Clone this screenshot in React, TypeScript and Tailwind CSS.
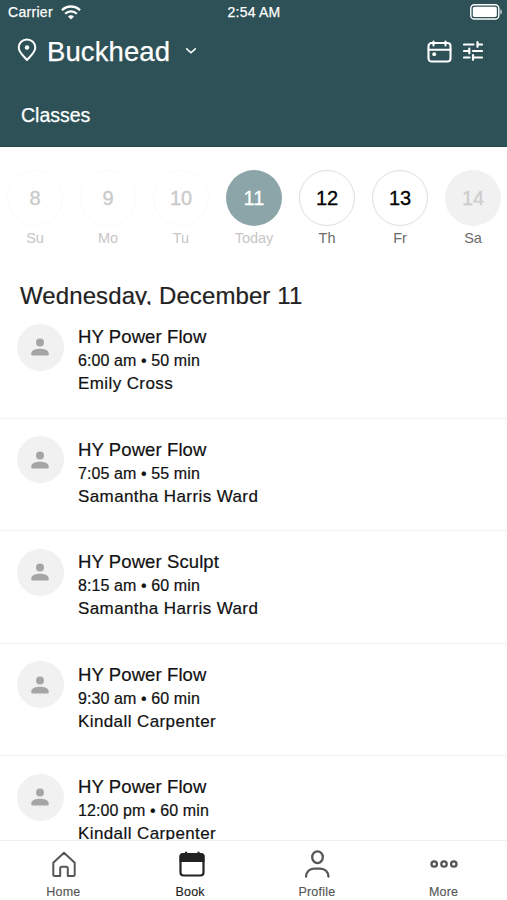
const days = [
  { num: '8', label: 'Su', state: 'past' },
  { num: '9', label: 'Mo', state: 'past' },
  { num: '10', label: 'Tu', state: 'past' },
  { num: '11', label: 'Today', state: 'active' },
  { num: '12', label: 'Th', state: 'open' },
  { num: '13', label: 'Fr', state: 'open' },
  { num: '14', label: 'Sa', state: 'closed' },
]

const circleStyles: Record<string, string> = {
  past: 'border border-[#fafafa] text-[#c9c9c9]',
  active: 'bg-[#8ba5a8] text-white',
  open: 'border border-[#dedede] text-black',
  closed: 'bg-[#f1f1f1] text-[#cdcdcd]',
}

const labelStyles: Record<string, string> = {
  past: 'text-[#c6c6c6]',
  active: 'text-[#c6c6c6]',
  open: 'text-[#6b6b6b]',
  closed: 'text-[#6b6b6b]',
}

const classes = [
  { title: 'HY Power Flow', time: '6:00 am • 50 min', teacher: 'Emily Cross' },
  { title: 'HY Power Flow', time: '7:05 am • 55 min', teacher: 'Samantha Harris Ward' },
  { title: 'HY Power Sculpt', time: '8:15 am • 60 min', teacher: 'Samantha Harris Ward' },
  { title: 'HY Power Flow', time: '9:30 am • 60 min', teacher: 'Kindall Carpenter' },
  { title: 'HY Power Flow', time: '12:00 pm • 60 min', teacher: 'Kindall Carpenter' },
]

function StatusBar() {
  return (
    <div className="flex h-6 items-center justify-between pl-2 pr-1 text-[14px] leading-6">
      <div className="flex w-[160px] items-center gap-2">
        <span className="tracking-[0.3px]">Carrier</span>
        <svg width="20" height="15" viewBox="0 0 20 15" fill="none" stroke="currentColor" strokeWidth="2.3">
          <path d="M.9 5.2a13 13 0 0 1 18.2 0" />
          <path d="M4.2 8.7a8.2 8.2 0 0 1 11.6 0" />
          <path d="M6.9 11.5a4.4 4.4 0 0 1 6.2 0L10 14.6Z" fill="currentColor" stroke="none" />
        </svg>
      </div>
      <span className="mr-[3px] tracking-[0.2px]">2:54 AM</span>
      <div className="flex w-[160px] justify-end">
        <svg width="33" height="16" viewBox="0 0 33 16" fill="none">
          <rect x=".8" y=".8" width="28" height="14.2" rx="3.6" stroke="currentColor" strokeWidth="1.4" />
          <rect x="2.8" y="2.8" width="24" height="10.2" rx="1.8" fill="currentColor" />
          <path d="M30.5 5.3c1.6.4 1.6 4.8 0 5.2Z" fill="currentColor" />
        </svg>
      </div>
    </div>
  )
}

function Header() {
  return (
    <header className="h-[147px] shrink-0 border-b border-[#24464a] bg-[#2d5156] text-white [-webkit-text-stroke:0.25px_currentColor]">
      <StatusBar />
      <div className="flex h-[54px] items-center pl-[17px] pr-[24px]">
        <svg className="-mt-[2px]" width="20" height="24" viewBox="0 0 20 24" fill="none" stroke="currentColor" strokeWidth="2" strokeLinejoin="round">
          <path d="M10 22C7.4 18.8 1.7 14.3 1.7 9.7a8.3 8.3 0 0 1 16.6 0C18.3 14.3 12.6 18.8 10 22Z" />
          <circle cx="10" cy="9.5" r="2.2" fill="currentColor" stroke="none" />
        </svg>
        <span className="ml-[10px] mt-[2px] text-[27.5px] leading-[54px] tracking-[0.1px]">Buckhead</span>
        <svg className="ml-[15px]" width="12" height="8" viewBox="0 0 12 8" fill="none" stroke="currentColor" strokeWidth="1.5">
          <path d="m1.2 1.4 4.8 4.4 4.8-4.4" />
        </svg>
        <div className="ml-auto flex items-center gap-[11px]">
          <svg width="25" height="23" viewBox="0 0 25 23" fill="none" stroke="currentColor" strokeWidth="2.1" strokeLinecap="round">
            <rect x="1.5" y="3" width="22" height="18.5" rx="3" />
            <path d="M1.5 9.7h22M6.5 1.5v4M18.5 1.5v4" />
            <circle cx="7.2" cy="14.2" r="1.9" fill="currentColor" stroke="none" />
          </svg>
          <svg width="20" height="20" viewBox="0 0 20 20" fill="none" stroke="currentColor" strokeWidth="2.2" strokeLinecap="round">
            <path d="M1 3.5h9.500M14.500 3.500H19M14.500 1.200v4.600M1 10h4M6.300 7.700v4.600M10 10h9M1 16.500h5.500M10 16.500h9M10 14.200v4.600" />
          </svg>
        </div>
      </div>
      <div className="pl-[21px] pt-[20px] text-[19.5px] leading-[34px]">Classes</div>
    </header>
  )
}

function DayPicker() {
  return (
    <div className="-ml-[1.5px] -mr-[2.5px] grid h-[117px] shrink-0 grid-cols-7 content-start pt-[23px]">
      {days.map((d) => (
        <div key={d.num} className="flex flex-col items-center">
          <div className={`flex h-14 w-14 items-center justify-center rounded-full text-[20px] [-webkit-text-stroke:0.3px_currentColor] ${circleStyles[d.state]}`}>
            {d.num}
          </div>
          <span className={`text-[14.5px] leading-6 ${labelStyles[d.state]}`}>{d.label}</span>
        </div>
      ))}
    </div>
  )
}

function Avatar() {
  return (
    <div className="flex h-[47px] w-[47px] shrink-0 items-center justify-center rounded-full bg-[#f1f1f1]">
      <svg className="-ml-px" width="18" height="18" viewBox="0 0 18 18" fill="#a5a5a5">
        <circle cx="9" cy="4.5" r="4" />
        <path d="M.3 15.4C.3 12 5 10.7 9 10.7s8.7 1.3 8.7 4.7v.9q0 1.2-1.2 1.2h-15Q.3 17.5.3 16.3Z" />
      </svg>
    </div>
  )
}

function ClassList() {
  return (
    <div className="mt-[1.5px] min-h-0 flex-1 overflow-hidden">
      {classes.map((c, i) => (
        <div key={i} className="flex h-[112.5px] gap-[14px] border-b border-[#f3f3f3] pl-[17px] pt-[17.5px] text-[#111] [-webkit-text-stroke:0.2px_currentColor]">
          <Avatar />
          <div className="pt-[1.5px]">
            <p className="text-[18.5px] leading-6 tracking-[0.1px]">{c.title}</p>
            <p className="text-[16px] leading-6 tracking-[0.1px]">{c.time}</p>
            <p className="text-[17px] leading-[21px] tracking-[0.4px]">{c.teacher}</p>
          </div>
        </div>
      ))}
    </div>
  )
}

function TabBar() {
  return (
    <nav className="grid h-[60px] shrink-0 grid-cols-4 border-t border-[#f0f0f0] bg-white text-[12.5px] tracking-[0.2px] text-[#565656] [-webkit-text-stroke:0.15px_currentColor]">
      <div className="flex flex-col items-center pt-[9px]">
        <svg className="ml-px" width="26" height="28" viewBox="0 0 26 28" fill="none" stroke="currentColor" strokeWidth="2" strokeLinejoin="round">
          <path d="M2.3 12.8 13 2.8l10.7 10v12a1.300 1.300 0 0 1-1.300 1.300h-5.600v-7.500q0-1.800-1.800-1.800h-4q-1.800 0-1.800 1.800v7.500H3.600a1.300 1.300 0 0 1-1.300-1.300Z" />
        </svg>
        <span className="mt-[4px] leading-5">Home</span>
      </div>
      <div className="flex flex-col items-center pt-[9px] text-[#222]">
        <svg className="ml-[3px]" width="26" height="28" viewBox="0 0 26 28" fill="none" stroke="currentColor" strokeWidth="2.2" strokeLinecap="round">
          <rect x="1.5" y="4" width="23" height="21.5" rx="3" />
          <path d="M1.7 5.500Q2.200 4 4.200 4h17.500q2 0 2.700 1.500V11H1.700ZM7 2.500v2M19.500 2.500v2" fill="currentColor" />
        </svg>
        <span className="mt-[4px] leading-5">Book</span>
      </div>
      <div className="flex flex-col items-center pt-[9px]">
        <svg width="26" height="28" viewBox="0 0 26 28" fill="none" stroke="currentColor" strokeWidth="2.3" strokeLinecap="round">
          <ellipse cx="13.500" cy="7.200" rx="5.300" ry="5.900" />
          <path d="M2 26.500c.5-4.500 3.500-7.800 8-7.800h6.500c4.500 0 7.500 3.300 8 7.800" />
        </svg>
        <span className="mt-[4px] leading-5">Profile</span>
      </div>
      <div className="flex flex-col items-center pt-[9px]">
        <svg width="28" height="28" viewBox="0 0 28 28" fill="none" stroke="currentColor" strokeWidth="2.3">
          <circle cx="4.200" cy="14" r="2.700" />
          <circle cx="14" cy="14" r="2.700" />
          <circle cx="23.800" cy="14" r="2.700" />
        </svg>
        <span className="mt-[4px] leading-5">More</span>
      </div>
    </nav>
  )
}

export default function App() {
  return (
    <div className="flex h-[900px] w-[507px] flex-col overflow-hidden bg-white font-['Liberation_Sans',Arial,sans-serif]">
      <Header />
      <DayPicker />
      {/* the heading strip is shorter than its line, so descenders are cut off */}
      <h1 className="h-[40.5px] shrink-0 overflow-hidden pl-5 pt-4 text-[24px] leading-8 tracking-[0.1px] text-[#222] [-webkit-text-stroke:0.2px_currentColor]">
        Wednesday, December 11
      </h1>
      <ClassList />
      <TabBar />
    </div>
  )
}
